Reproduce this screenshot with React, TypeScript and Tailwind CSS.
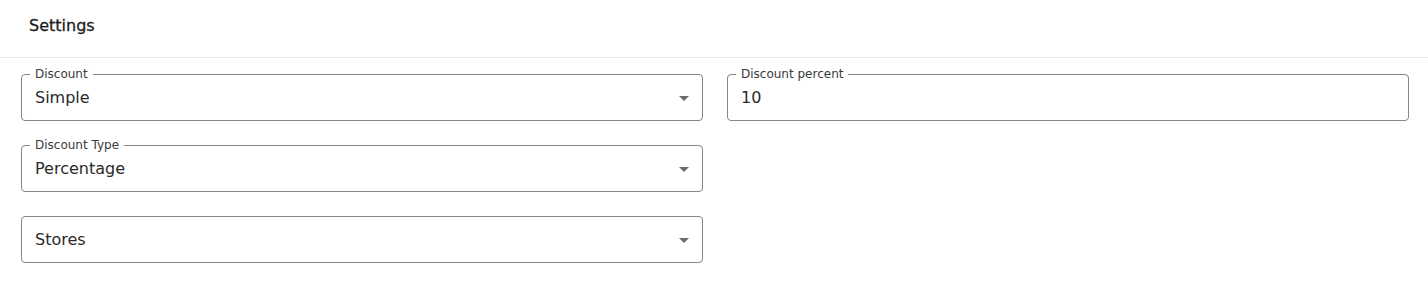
import React from "react";

type FieldProps = {
  label?: string;
  value: string;
  select?: boolean;
};

function ArrowDown() {
  return (
    <svg
      viewBox="0 0 24 24"
      className="w-6 h-6 text-[#6b6b6b] absolute right-[6px] top-1/2 -translate-y-1/2"
      fill="currentColor"
    >
      <path d="M7 10l5 5 5-5z" />
    </svg>
  );
}

function Field({ label, value, select }: FieldProps) {
  return (
    <div className="relative h-[47px] rounded-[4px] border border-[#858585] flex items-center pl-[13px] pr-8">
      {label && (
        <span className="absolute left-[8px] -top-[9px] bg-white px-[5px] text-[12px] leading-[16px] text-[#3a3a3a]">
          {label}
        </span>
      )}
      <span className="text-[16px] text-[#2a2a2a] pt-[1px]">{value}</span>
      {select && <ArrowDown />}
    </div>
  );
}

export default function App() {
  return (
    <div
      className="w-[1428px] h-[283px] bg-white text-[#1f1f1f]"
      style={{ fontFamily: '"DejaVu Sans", sans-serif' }}
    >
      <div className="h-[58px] border-b border-[#e6e6e6] flex items-center pl-[29px] pb-[5px]">
        <h2 className="text-[16px] text-[#1c1c1c] [-webkit-text-stroke:0.3px_#1c1c1c]">
          Settings
        </h2>
      </div>
      <div className="grid grid-cols-2 gap-x-[24px] gap-y-[24px] pl-[21px] pr-[19px] pt-[16px]">
        <Field label="Discount" value="Simple" select />
        <Field label="Discount percent" value="10" />
        <Field label="Discount Type" value="Percentage" select />
        <div />
        <Field value="Stores" select />
      </div>
    </div>
  );
}
